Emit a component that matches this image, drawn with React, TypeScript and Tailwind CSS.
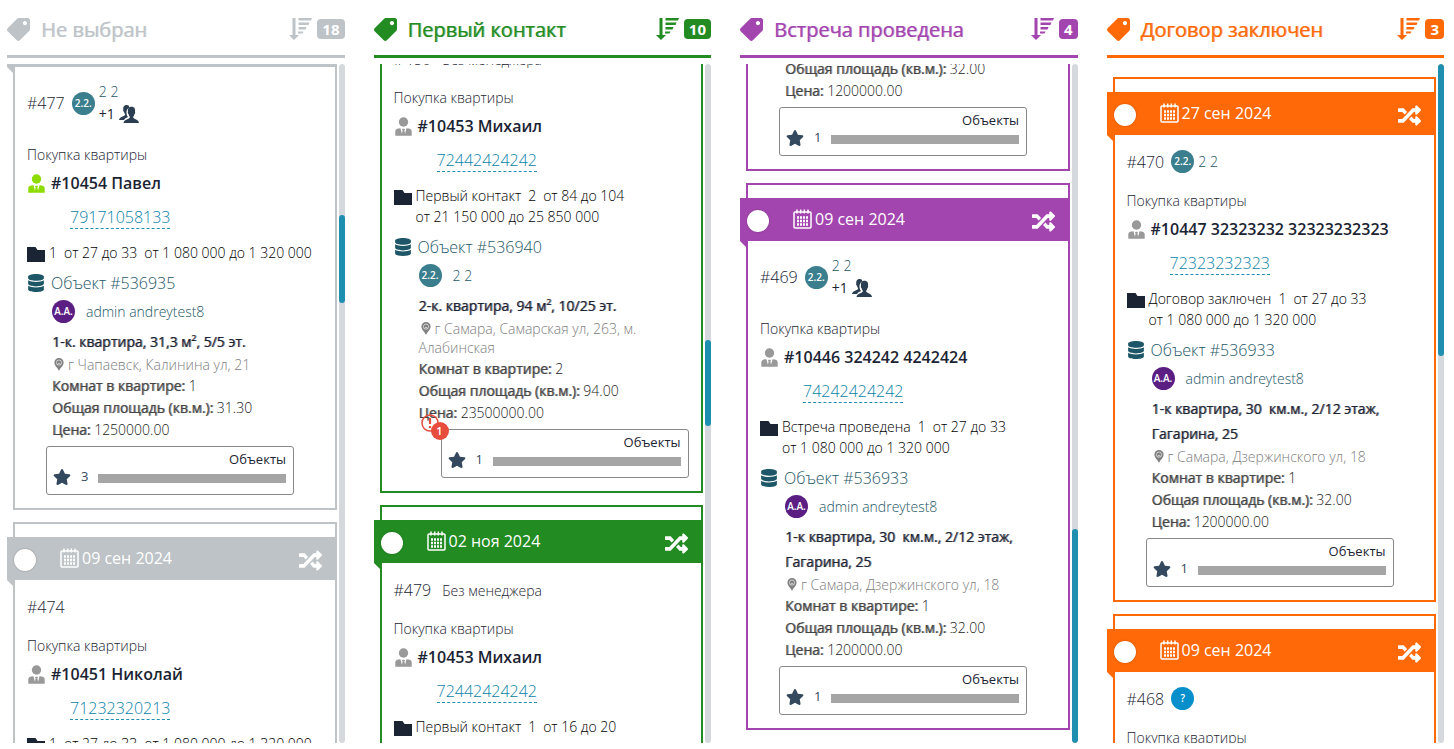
import React from "react";
import { FaTag, FaDatabase, FaRandom, FaStar } from "react-icons/fa";

type Manager = { initials: string; name?: string; extra?: number; tone: "teal" | "blue" };

type Estate = {
  id?: string;
  owner?: string;
  initials?: string;
  purple?: boolean;
  title?: string;
  address?: string;
  rooms?: string;
  area: string;
  price: string;
  rating: number;
};

// Rows that lie outside the scrolled window are left out of a deal.
type Deal = {
  id?: string;
  date?: string;
  manager?: Manager;
  noManager?: boolean;
  kind?: string;
  client?: string;
  active?: boolean;
  phone?: string;
  filter?: string[];
  estate?: Estate;
  alerts?: number;
};

type Theme = { text: string; bg: string; border: string; fold: string };

type Stage = {
  title: string;
  count: number;
  theme: Theme;
  scroll: number;
  thumb: { start: string; size: string };
  deals: Deal[];
};

const GREY: Theme = { text: "text-[#bdc3c7]", bg: "bg-[#bdc3c7]", border: "border-[#bdc3c7]", fold: "border-t-[#bdc3c7]" };
const GREEN: Theme = { text: "text-[#228b22]", bg: "bg-[#228b22]", border: "border-[#228b22]", fold: "border-t-[#228b22]" };
const PURPLE: Theme = { text: "text-[#a345ae]", bg: "bg-[#a345ae]", border: "border-[#a345ae]", fold: "border-t-[#a345ae]" };
const ORANGE: Theme = { text: "text-[#ff6908]", bg: "bg-[#ff6908]", border: "border-[#ff6908]", fold: "border-t-[#ff6908]" };

const STRONG = "font-normal [text-shadow:1px_0_0_color-mix(in_srgb,currentColor_60%,transparent)]";

const KIND = "Покупка квартиры";
const PRICE_RANGE = "от 1 080 000 до 1 320 000";

const gagarina: Estate = {
  id: "536933",
  owner: "admin andreytest8",
  initials: "A.A.",
  purple: true,
  title: "1-к квартира, 30\u00a0 км.м., 2/12 этаж, Гагарина, 25",
  address: "г Самара, Дзержинского ул, 18",
  rooms: "1",
  area: "32.00",
  price: "1200000.00",
  rating: 1,
};

const stages: Stage[] = [
  {
    title: "Не выбран",
    count: 18,
    theme: GREY,
    scroll: 68,
    thumb: { start: "22.2%", size: "13%" },
    deals: [
      {
        id: "477",
        manager: { initials: "2.2.", name: "2 2", extra: 1, tone: "teal" },
        kind: KIND,
        client: "#10454 Павел",
        active: true,
        phone: "79171058133",
        filter: ["1", "от 27 до 33", PRICE_RANGE],
        estate: {
          id: "536935",
          owner: "admin andreytest8",
          initials: "A.A.",
          purple: true,
          title: "1-к. квартира, 31,3 м², 5/5 эт.",
          address: "г Чапаевск, Калинина ул, 21",
          rooms: "1",
          area: "31.30",
          price: "1250000.00",
          rating: 3,
        },
      },
      {
        id: "474",
        date: "09 сен 2024",
        kind: KIND,
        client: "#10451 Николай",
        phone: "71232320213",
        filter: ["1", "от 27 до 33", PRICE_RANGE],
      },
    ],
  },
  {
    title: "Первый контакт",
    count: 10,
    theme: GREEN,
    scroll: 103,
    thumb: { start: "40.6%", size: "12.7%" },
    deals: [
      {
        id: "480",
        noManager: true,
        kind: KIND,
        client: "#10453 Михаил",
        phone: "72442424242",
        filter: ["Первый контакт", "2", "от 84 до 104", "от 21 150 000 до 25 850 000"],
        estate: {
          id: "536940",
          owner: "2 2",
          initials: "2.2.",
          title: "2-к. квартира, 94 м², 10/25 эт.",
          address: "г Самара, Самарская ул, 263, м. Алабинская",
          rooms: "2",
          area: "94.00",
          price: "23500000.00",
          rating: 1,
        },
        alerts: 1,
      },
      {
        id: "479",
        date: "02 ноя 2024",
        noManager: true,
        kind: KIND,
        client: "#10453 Михаил",
        phone: "72442424242",
        filter: ["Первый контакт", "1", "от 16 до 20"],
      },
    ],
  },
  {
    title: "Встреча проведена",
    count: 4,
    theme: PURPLE,
    scroll: 34,
    thumb: { start: "68.5%", size: "31.5%" },
    deals: [
      { estate: { area: "32.00", price: "1200000.00", rating: 1 } },
      {
        id: "469",
        date: "09 сен 2024",
        manager: { initials: "2.2.", name: "2 2", extra: 1, tone: "teal" },
        kind: KIND,
        client: "#10446 324242 4242424",
        phone: "74242424242",
        filter: ["Встреча проведена", "1", "от 27 до 33", PRICE_RANGE],
        estate: gagarina,
      },
    ],
  },
  {
    title: "Договор заключен",
    count: 3,
    theme: ORANGE,
    scroll: 0,
    thumb: { start: "0%", size: "43%" },
    deals: [
      {
        id: "470",
        date: "27 сен 2024",
        manager: { initials: "2.2.", name: "2 2", tone: "teal" },
        kind: KIND,
        client: "#10447 32323232 32323232323",
        phone: "72323232323",
        filter: ["Договор заключен", "1", "от 27 до 33", PRICE_RANGE],
        estate: gagarina,
      },
      {
        id: "468",
        date: "09 сен 2024",
        manager: { initials: "?", tone: "blue" },
        kind: KIND,
      },
    ],
  },
];

function SortIcon() {
  return (
    <svg width="24" height="24" viewBox="0 0 24 24" fill="currentColor" aria-hidden="true">
      <path d="M3.500 1h3v17h3.500l-5 5-5-5h3.500z" />
      <path d="M9.500 1H23l-1 2.500H9.500zM9.500 5.500h11l-1 2.500h-10zM9.500 10h8l-1 2.500h-7zM9 14.500h5.500l-1 2H9z" />
    </svg>
  );
}

function CalendarIcon() {
  return (
    <svg width="19" height="20" viewBox="0 0 19 20" fill="none" stroke="currentColor" aria-hidden="true">
      <rect x="1" y="3" width="17" height="16" rx="1" strokeWidth="1.500" />
      <path d="M4 .5v4M7.700 .5v4M11.300 .5v4M15 .5v4" strokeWidth="1.500" />
      <path d="M4 8.500h11M4 12h11M4 15.500h11" strokeWidth="2.500" strokeDasharray="2 1" />
    </svg>
  );
}

function PersonIcon() {
  return (
    <svg width="17" height="19" viewBox="0 0 17 19" fill="currentColor" aria-hidden="true">
      <circle cx="8.500" cy="5" r="4.700" />
      <path d="M.3 18.700v-4.200c0-2.200 1.900-3.300 5-3.300h6.400c3.100 0 5 1.100 5 3.300v4.200z" />
      <path d="M5.400 11l1.600 6 .7-3.500-.7-1.500h3l-.7 1.500.7 3.500 1.600-6z" fill="#fff" />
      <path d="M7.500 11.800h2l-.5 1.500.6 3.700-1.100 1.200L7.400 17l.6-3.700z" />
    </svg>
  );
}

function PeopleIcon() {
  return (
    <svg width="20" height="18" viewBox="0 0 20 18" fill="currentColor" aria-hidden="true">
      <path d="M8 0C5 0 4 2 4.300 4.500c-.4 1 .1 2 .7 2.300.2 1.200.6 2 1.200 2.600-.5 2-5.700 2-6.200 5.600h5c1-2 3-2.300 4-3-2-2.500-2.500-8 1.500-9.500C10 .8 9.500 0 8 0z" />
      <path d="M12.500 1.800c-3 0-4 2.200-3.500 5-.5.800 0 2 .6 2.400.3 1.300.8 2.200 1.400 2.800-.4 2.500-6 2-6.500 6H20c-.4-4-5.400-3.500-6-6 .6-.6 1.100-1.500 1.400-2.800.6-.4 1.100-1.600.6-2.400.5-2.800-.5-5-3.500-5z" />
    </svg>
  );
}

function FolderIcon() {
  return (
    <svg width="18" height="15" viewBox="0 0 18 15" fill="currentColor" aria-hidden="true">
      <path d="M0 0h8.500l2 3H18v12H0z" />
    </svg>
  );
}

function PinIcon() {
  return (
    <svg width="10" height="13" viewBox="0 0 10 13" className="mr-[4px] ml-[2px] inline-block align-[-1px]" aria-hidden="true">
      <path d="M5 0a4.600 4.600 0 0 0-4.600 4.600C.4 8 3.500 9.500 5 13c1.500-3.500 4.600-5 4.600-8.400A4.600 4.600 0 0 0 5 0z" fill="currentColor" />
      <circle cx="5" cy="4.600" r="2.600" fill="none" stroke="#fff" strokeWidth=".6" />
      <path d="M3.300 6.400c.5-1.200 2.900-1.200 3.400 0" fill="none" stroke="#fff" strokeWidth=".6" />
    </svg>
  );
}

function AlertIcon() {
  return (
    <svg width="18" height="18" viewBox="0 0 18 18" fill="none" stroke="currentColor" aria-hidden="true">
      <circle cx="9" cy="9" r="8" strokeWidth="1.500" />
      <path d="M9 4v6M9 12v2" strokeWidth="2.200" />
    </svg>
  );
}

function Avatar({ label, tone }: { label: string; tone: string }) {
  return (
    <span className={`flex size-[23px] shrink-0 items-center justify-center rounded-full text-[10px] font-semibold text-white ${tone}`}>
      {label}
    </span>
  );
}

function DealManager({ deal }: { deal: Deal }) {
  const m = deal.manager;
  if (deal.noManager) return <span className="mt-[2px] ml-[11px] text-sm font-light">Без менеджера</span>;
  if (!m) return null;
  return (
    <>
      <span className="ml-[7px]">
        <Avatar label={m.initials} tone={m.tone === "teal" ? "bg-[#3b7e8e]" : "bg-[#078fcb]"} />
      </span>
      {m.name && (
        <span className="ml-[4px] text-sm font-light text-[#1d5666]">
          <a href="#manager" className="block leading-[22px]">{m.name}</a>
          {m.extra && (
            <span className="flex h-[22px] items-center gap-[4px] font-normal text-[#1b2433]">
              +{m.extra}
              <span className="text-[#2b3d50]"><PeopleIcon /></span>
            </span>
          )}
        </span>
      )}
    </>
  );
}

function Param({ label, value }: { label: string; value: string }) {
  return (
    <div className="leading-[22px]">
      <dt className={`inline ${STRONG}`}>{label}</dt> <dd className="inline font-light text-[#222]">{value}</dd>
    </div>
  );
}

function EstateBlock({ estate, alerts }: { estate: Estate; alerts?: number }) {
  return (
    <section>
      {estate.id && (
        <a href="#estate" className="mt-[9px] flex h-[22px] items-center gap-[6px] text-base font-light text-[#1d5666]">
          <FaDatabase className="h-[18px] w-[18px]" />
          Объект #{estate.id}
        </a>
      )}
      <div className="pl-[25px]">
        {estate.owner && (
          <a href="#owner" className="mt-[6px] flex h-[23px] items-center gap-[11px] text-sm font-light text-[#1d5666]">
            <Avatar label={estate.initials ?? ""} tone={estate.purple ? "bg-[#5b1f84]" : "bg-[#3b7e8e]"} />
            {estate.owner}
          </a>
        )}
        {estate.title && <h4 className={`mt-[6px] mb-px text-sm leading-[25px] ${STRONG}`}>{estate.title}</h4>}
        {estate.address && (
          <p className="mb-px text-sm leading-[19px] font-light text-[#808080]">
            <PinIcon />
            {estate.address}
          </p>
        )}
        <dl className="text-sm text-[#444]">
          {estate.rooms && <Param label="Комнат в квартире:" value={estate.rooms} />}
          <Param label="Общая площадь (кв.м.):" value={estate.area} />
          <Param label="Цена:" value={estate.price} />
        </dl>
      </div>
      <div className={`relative mt-[5px] w-[248px] rounded-[3px] border border-[#888] ${alerts ? "ml-[47px]" : "ml-[19px]"}`}>
        {alerts && (
          <button type="button" aria-label="Напоминания" className="absolute -top-[16px] -left-[21px] text-[#e74c3c]">
            <AlertIcon />
            <span className="absolute top-[8px] left-[10px] flex size-[18px] items-center justify-center rounded-full bg-[#e74c3c] text-[11px] font-semibold text-white">
              {alerts}
            </span>
          </button>
        )}
        <p className="px-[7px] pt-[2px] text-right text-[13px] leading-[20px]">Объекты</p>
        <div className="flex h-[25px] items-start gap-[10px] pr-[7px] pl-[6px]">
          <FaStar className="-mt-px size-[18px] text-[#34495e]" />
          <span className="w-[7px] text-[13px] leading-[14px] text-[#34495e]">{estate.rating}</span>
          <span className="mt-[5px] h-[9px] flex-1 bg-[#a5a5a5]" />
        </div>
      </div>
    </section>
  );
}

function DealCard({ deal, theme }: { deal: Deal; theme: Theme }) {
  return (
    <article className={`mb-[12px] ml-[6px] border-2 pt-[13px] pb-[13px] ${theme.border}`}>
      {deal.id && (
        <header className={`relative -mr-[2px] -ml-[8px] flex h-[43px] items-center pr-[15px] pl-[7px] text-white ${theme.bg}`}>
          {deal.date && (
            <>
              <input
                type="checkbox"
                aria-label={`Выбрать #${deal.id}`}
                className="mt-[3px] size-[22px] appearance-none rounded-full bg-white shadow-[0_0_2px_#0004]"
              />
              <span className="mb-px ml-[24px]"><CalendarIcon /></span>
              <time className="mb-px ml-[3px] flex-1 text-base">{deal.date}</time>
              <button type="button" aria-label="Переместить" className="mt-[3px]">
                <FaRandom className="size-[23px]" />
              </button>
            </>
          )}
          <i className={`absolute top-full left-0 border-t-[6px] border-l-[6px] border-l-transparent ${theme.fold}`} />
        </header>
      )}
      <div className="px-[12px]">
        {deal.id && (
          <div className={deal.manager?.extra ? "pt-[14px] pb-[19px]" : "pt-[15px] pb-[17px]"}>
            <div className="flex min-h-[23px] items-center">
              <a href="#deal" className="text-base leading-[22px] font-light">#{deal.id}</a>
              <DealManager deal={deal} />
            </div>
          </div>
        )}
        {deal.kind && <p className="text-sm leading-[22px] font-light">{deal.kind}</p>}
        {deal.client && (
          <a href="#client" className="mt-[3px] flex h-[28px] items-center gap-[6px] text-base font-semibold whitespace-nowrap">
            <span className={`ml-px ${deal.active ? "text-[#8edb00]" : "text-[#999]"}`}><PersonIcon /></span>
            {deal.client}
          </a>
        )}
        {deal.phone && (
          <div className="mt-[9px] flex pl-[43px]">
            <a href={`tel:${deal.phone}`} className="border-b border-dashed border-[#1f8fb0] text-base leading-[22px] font-light text-[#0b83a6]">
              {deal.phone}
            </a>
          </div>
        )}
        {deal.filter && (
          <div className="mt-[13px] flex gap-[4px] text-sm leading-[21px] font-light text-black">
            <span className="mt-[5px] shrink-0 text-[#1b2433]"><FolderIcon /></span>
            <span className="flex flex-wrap gap-x-[7px]">
              {deal.filter.map((part) => (
                <span key={part} className="whitespace-nowrap">{part}</span>
              ))}
            </span>
          </div>
        )}
        {deal.estate && <EstateBlock estate={deal.estate} alerts={deal.alerts} />}
      </div>
    </article>
  );
}

function StageColumn({ stage }: { stage: Stage }) {
  const { theme } = stage;
  return (
    <section className="flex min-h-0 min-w-0 flex-col">
      <header className={`flex h-[58px] shrink-0 items-center border-b-[3px] pt-[3px] ${theme.border} ${theme.text}`}>
        <FaTag className="size-[23px] -scale-x-100" />
        <h2 className={`ml-[11px] flex-1 pt-[2px] text-[20px] leading-[26px] whitespace-nowrap ${STRONG}`}>{stage.title}</h2>
        <button type="button" aria-label="Сортировка"><SortIcon /></button>
        <span className={`ml-[4px] rounded-[4px] px-[5px] text-[15px] leading-[20px] font-bold text-white ${theme.bg}`}>
          {stage.count}
        </span>
      </header>
      <div className="mt-[6px] flex min-h-0 flex-1 gap-[2px] overflow-hidden">
        <div className="min-w-0 flex-1 overflow-hidden">
          <div className="pt-[13px]" style={{ marginTop: -stage.scroll }}>
            {stage.deals.map((deal, i) => (
              <DealCard key={i} deal={deal} theme={theme} />
            ))}
          </div>
        </div>
        <div className="w-[6px] shrink-0 overflow-hidden rounded-full bg-[#d5d9de]">
          <div className="h-full">
            <div style={{ height: stage.thumb.start }} />
            <div className="rounded-full bg-[#1f8fb0]" style={{ height: stage.thumb.size }} />
          </div>
        </div>
      </div>
    </section>
  );
}

export default function App() {
  return (
    <main className="grid h-screen grid-cols-4 grid-rows-1 gap-[29px] overflow-hidden bg-white pr-[10px] pb-[6px] pl-[7px] font-['Open_Sans','Noto_Sans',sans-serif] text-[#1b2433]">
      {stages.map((stage) => (
        <StageColumn key={stage.title} stage={stage} />
      ))}
    </main>
  );
}
